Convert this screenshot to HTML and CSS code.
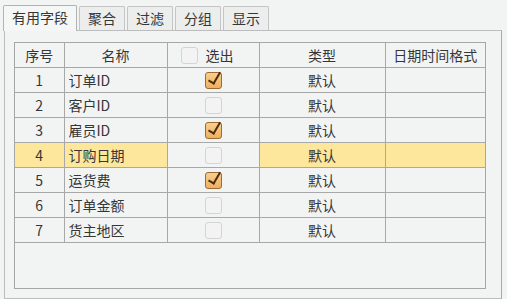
FILE: index.html
```html
<!DOCTYPE html>
<html lang="zh">
<head>
    <meta charset="UTF-8">
    <title>字段设置</title>
    <link rel="stylesheet" href="styles.css">
</head>
<body>
    <div class="tabs">
        <div class="tab active">有用字段</div>
        <div class="tab">聚合</div>
        <div class="tab">过滤</div>
        <div class="tab">分组</div>
        <div class="tab">显示</div>
    </div>
    <div class="panel">
        <div class="grid">
            <table>
                <colgroup>
                    <col style="width: 49px">
                    <col style="width: 103px">
                    <col style="width: 92px">
                    <col style="width: 126px">
                    <col>
                </colgroup>
                <thead>
                    <tr>
                        <th>序号</th>
                        <th>名称</th>
                        <th><span class="check"></span>选出</th>
                        <th>类型</th>
                        <th>日期时间格式</th>
                    </tr>
                </thead>
                <tbody>
                    <tr><td class="num">1</td><td class="name">订单ID</td><td class="sel"><span class="check on"></span></td><td class="type">默认</td><td></td></tr>
                    <tr><td class="num">2</td><td class="name">客户ID</td><td class="sel"><span class="check"></span></td><td class="type">默认</td><td></td></tr>
                    <tr><td class="num">3</td><td class="name">雇员ID</td><td class="sel"><span class="check on"></span></td><td class="type">默认</td><td></td></tr>
                    <tr class="current"><td class="num">4</td><td class="name">订购日期</td><td class="sel"><span class="check"></span></td><td class="type">默认</td><td></td></tr>
                    <tr><td class="num">5</td><td class="name">运货费</td><td class="sel"><span class="check on"></span></td><td class="type">默认</td><td></td></tr>
                    <tr><td class="num">6</td><td class="name">订单金额</td><td class="sel"><span class="check"></span></td><td class="type">默认</td><td></td></tr>
                    <tr><td class="num">7</td><td class="name">货主地区</td><td class="sel"><span class="check"></span></td><td class="type">默认</td><td></td></tr>
                </tbody>
            </table>
        </div>
    </div>
</body>
</html>
```

FILE: styles.css
```css
body {
    margin: 0;
    background-color: #f2f3f3;
    font-family: "Noto Sans CJK SC", "DejaVu Sans", sans-serif;
    font-size: 14px;
    color: #363636;
}
.tabs {
    display: flex;
    gap: 2px;
    padding: 5px 0 0 3px;
}
.tab {
    line-height: 23px;
    padding: 0 8px;
    border: 1px solid #c4c4c4;
    border-bottom: none;
    background-color: #eceded;
    border-radius: 2px 2px 0 0;
    margin-top: 1px;
    height: 23px;
}
.tab.active {
    background-color: #f5f6f6;
    border-color: #b2b2b2;
    margin-top: 0;
    height: 25px;
    margin-bottom: -1px;
    position: relative;
}
.panel {
    margin: 0 5px 0 4px;
    height: 256px;
    padding: 11px 0 0 9px;
    border: 1px solid #bdbdbd;
    border-right-color: #a9a9a9;
    background-color: #f2f3f3;
}
.grid {
    width: 470px;
    height: 245px;
    border: 1px solid #a6a6a6;
    background-color: #f2f4f4;
}
table {
    width: 100%;
    border-collapse: collapse;
    table-layout: fixed;
}
th, td {
    height: 24px;
    padding: 0;
    border-right: 1px solid #a8a8a8;
    border-bottom: 1px solid #a8a8a8;
    font-weight: normal;
    text-align: center;
    white-space: nowrap;
    overflow: hidden;
}
th:last-child, td:last-child {
    border-right: none;
}
td.name {
    text-align: left;
    padding-left: 4px;
}
tr.current td {
    background-color: #fde79c;
}
tr.current td.sel {
    background-color: #f2f4f4;
}
.check {
    display: inline-block;
    width: 15px;
    height: 15px;
    border: 1px solid #d4d4d4;
    border-radius: 3px;
    background-color: #f3f3f3;
    vertical-align: middle;
    position: relative;
    top: -1px;
}
th .check {
    margin-right: 8px;
    margin-left: -12px;
}
.check.on {
    border-color: #9c6a34;
    background: linear-gradient(#f9cf8c, #efb060);
}
.check.on::after {
    content: "";
    position: absolute;
    left: 5px;
    top: -3px;
    width: 5px;
    height: 12px;
    border-right: 2px solid #4e2c0e;
    border-bottom: 2px solid #4e2c0e;
    transform: rotate(30deg);
}
```
